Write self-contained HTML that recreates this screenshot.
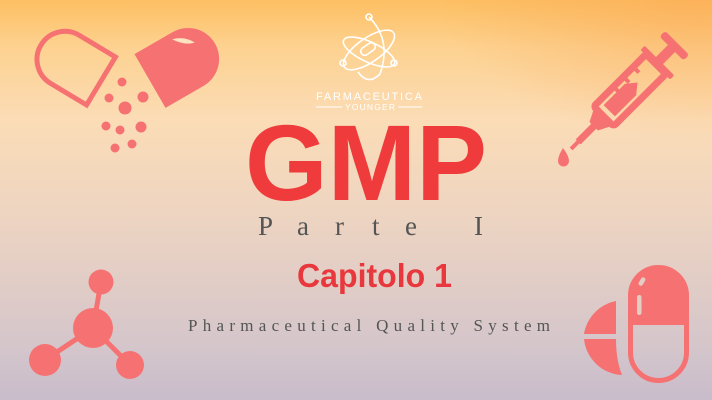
<!DOCTYPE html>
<html><head><meta charset="utf-8"><style>
html,body{margin:0;padding:0}
body{width:712px;height:400px;overflow:hidden;background:linear-gradient(180deg,#fdbf62 0%,#fdd291 12%,#fbdcb6 30%,#f0d6c0 50%,#e2cdc6 70%,#d3c5cb 88%,#c9bccb 100%)}
svg{position:absolute;left:0;top:0}
</style></head><body>
<div style="position:absolute;inset:0;background:radial-gradient(ellipse 260px 140px at 700px 0px,rgba(250,165,80,0.5),rgba(250,165,80,0))"></div>
<svg width="712" height="400" viewBox="0 0 712 400">
<g fill="#f67272" stroke="none">
 <!-- left capsule -->
 <g transform="translate(101,81) rotate(31)"><path d="M0,-28 H-42 A28,28 0 0 0 -42,28 H0 Z" fill="none" stroke="#f67272" stroke-width="5"/></g>
 <g transform="translate(150,81) rotate(-30)"><path d="M0,-31 H44 A31,31 0 0 1 44,31 H0 Z"/><path d="M44,-24 q12,3 18,14 q-10,-2 -18,-14z" fill="#fde3c0" transform="translate(-4,-1)"/></g>
 <circle cx="122" cy="82" r="4.5"/><circle cx="109" cy="98" r="4.5"/><circle cx="143" cy="97" r="5.5"/><circle cx="125" cy="108" r="6.5"/><circle cx="106" cy="126" r="4.5"/><circle cx="120" cy="130" r="4.5"/><circle cx="141" cy="127" r="5.5"/><circle cx="115" cy="148" r="4.5"/><circle cx="132" cy="144" r="4.5"/>
 <!-- syringe -->
 <g transform="translate(622,98) rotate(-45)">
  <rect x="-26" y="-14" width="74" height="28" rx="3" fill="none" stroke="#f67272" stroke-width="7"/>
  <path d="M-18,-8 H12 L22,0 L12,8 H-18 Z"/>
  <rect x="0" y="-16" width="4" height="10"/><rect x="14" y="-16" width="4" height="10"/><rect x="28" y="-16" width="4" height="10"/>
  <path d="M-28,-12 L-40,-6 V6 L-28,12 Z"/>
  <rect x="-62" y="-3.5" width="24" height="7"/>
  <rect x="-72" y="-2" width="12" height="4"/>
  <rect x="47" y="-21" width="6" height="42" rx="2"/>
  <rect x="52" y="-5" width="20" height="10"/>
  <rect x="70" y="-17" width="8" height="34" rx="3"/>
 </g>
 <path d="M563,148 Q558,156 558,161 A5.5,5.5 0 0 0 569,161 Q569,156 563,148Z"/>
 <!-- molecule -->
 <line x1="93" y1="328" x2="101" y2="282" stroke="#f67272" stroke-width="5"/>
 <line x1="93" y1="328" x2="45" y2="360" stroke="#f67272" stroke-width="5"/>
 <line x1="93" y1="328" x2="130" y2="365" stroke="#f67272" stroke-width="5"/>
 <circle cx="101" cy="282" r="12.5"/><circle cx="93" cy="328" r="20"/><circle cx="45" cy="360" r="16"/><circle cx="130" cy="365" r="14"/>
 <!-- pill bottom right -->
 <path d="M630,325 V296 A28.5,28.5 0 0 1 687,296 V325 Z"/>
 <rect x="630.5" y="267.5" width="56" height="113" rx="28" fill="none" stroke="#f67272" stroke-width="5"/>
 <rect x="637" y="295" width="4.5" height="20" rx="2.2" fill="#e6cdc4"/>
 <rect x="640" y="277" width="4.5" height="9" rx="2.2" fill="#e6cdc4" transform="rotate(30 642 281)"/>
 <path d="M616,301 A40,40 0 0 0 584,334 H616 Z"/>
 <path d="M584,339 A40,40 0 0 0 622,375 Q616,360 616,339 Z"/>
</g>
<!-- logo -->
<g fill="none" stroke="#fff" stroke-width="1.6">
 <ellipse cx="369" cy="50" rx="30" ry="12" transform="rotate(-35 369 50)"/>
 <ellipse cx="369" cy="52" rx="28" ry="10" transform="rotate(25 369 52)"/>
 <path d="M369,17 Q392,40 380,74 Q368,86 358,72"/>
 <circle cx="369" cy="17" r="3" /><circle cx="343" cy="63" r="3"/><circle cx="394" cy="63" r="3"/>
 <rect x="360" y="45" width="16" height="8" rx="4" transform="rotate(-35 368 49)"/>
</g>
<text x="369" y="100" text-anchor="middle" textLength="106" font-family="Liberation Sans,sans-serif" font-size="11" fill="#fff">FARMACEUTICA</text>
<text x="370" y="110" text-anchor="middle" textLength="50" font-family="Liberation Sans,sans-serif" font-size="8.5" fill="#fff">YOUNGER</text>
<line x1="316" y1="107" x2="342" y2="107" stroke="#fff" stroke-width="1"/>
<line x1="398" y1="107" x2="422" y2="107" stroke="#fff" stroke-width="1"/>
<text x="245" y="200" textLength="242" lengthAdjust="spacingAndGlyphs" font-family="Liberation Sans,sans-serif" font-weight="bold" font-size="108" fill="#ef3b3b">GMP</text>
<g font-family="Liberation Serif,serif" font-size="27" fill="#555">
 <text x="258" y="235">P</text><text x="297" y="235">a</text><text x="335" y="235">r</text><text x="372" y="235">t</text><text x="405" y="235">e</text><text x="474" y="235">I</text>
</g>
<text x="297" y="287" textLength="155" lengthAdjust="spacingAndGlyphs" font-family="Liberation Sans,sans-serif" font-weight="bold" font-size="33" fill="#e8383d">Capitolo 1</text>
<text x="188" y="331" textLength="362" lengthAdjust="spacing" font-family="Liberation Serif,serif" font-size="17" fill="#555">Pharmaceutical Quality System</text>
</svg>
</body></html>
